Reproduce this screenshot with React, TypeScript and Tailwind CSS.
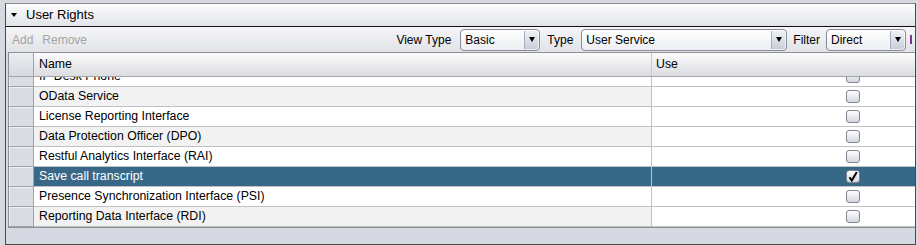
const ROWS = [
  { name: 'IP Desk Phone', checked: false },
  { name: 'OData Service', checked: false },
  { name: 'License Reporting Interface', checked: false },
  { name: 'Data Protection Officer (DPO)', checked: false },
  { name: 'Restful Analytics Interface (RAI)', checked: false },
  { name: 'Save call transcript', checked: true },
  { name: 'Presence Synchronization Interface (PSI)', checked: false },
  { name: 'Reporting Data Interface (RDI)', checked: false },
]

const SELECTED = 5

function Combo({ value, width }: { value: string; width: string }) {
  return (
    <div
      className={`${width} flex h-[22px] items-center rounded-[4px] border border-[#878c96] bg-gradient-to-b from-[#ffffff] to-[#eceef2]`}
    >
      <span className="flex-1 truncate pl-[4px] text-[12px] leading-none text-black">{value}</span>
      <div className="mr-[1px] flex h-[18px] w-[14px] items-center justify-center rounded-r-[3px] border-l border-[#a7adb8] bg-gradient-to-b from-[#eef1f5] to-[#c9cfd9]">
        <span className="h-0 w-0 border-x-[3.5px] border-t-[5px] border-x-transparent border-t-black" />
      </div>
    </div>
  )
}

function CheckBox({ checked }: { checked: boolean }) {
  return (
    <div className="flex h-[13px] w-[14px] items-center justify-center rounded-[3px] border border-[#7d8593] bg-gradient-to-b from-[#ffffff] to-[#d3d7df]">
      {checked && (
        <svg width="10" height="11" viewBox="0 0 10 11">
          <path d="M1.5 6.2 L3.8 9.5 L8.8 1" fill="none" stroke="#000" strokeWidth="2" strokeLinejoin="miter" />
        </svg>
      )}
    </div>
  )
}

export default function App() {
  return (
    <div
      className="h-[245px] w-[918px] overflow-hidden bg-[#d6d9df] pl-[5px] pt-[3px]"
      style={{ fontFamily: '"Liberation Sans", Arial, sans-serif' }}
    >
      <div className="flex h-[242px] w-[911px] flex-col border border-[#4a4a4a] border-t-[#8c8c8c] bg-[#d6d9e1]">
        {/* Title bar */}
        <div className="flex h-[23px] shrink-0 items-center border-b border-[#111] bg-gradient-to-b from-[#fcfcfd] to-[#e2e4e9] pl-[5px]">
          <span className="h-0 w-0 border-x-[3.5px] border-t-[4px] border-x-transparent border-t-black" />
          <span className="ml-[9px] text-[13px] text-black">User Rights</span>
        </div>

        {/* Toolbar */}
        <div className="flex h-[25px] shrink-0 items-center bg-gradient-to-b from-[#f6f6f8] to-[#e1e3e7] pl-[6px] pr-[3px] text-[12px]">
          <span className="text-[#a4a4a4]">Add</span>
          <span className="ml-[9px] text-[#a4a4a4]">Remove</span>
          <div className="ml-auto flex items-center">
            <span className="text-black">View Type</span>
            <div className="ml-[9px]">
              <Combo value="Basic" width="w-[80px]" />
            </div>
            <span className="ml-[7px] text-black">Type</span>
            <div className="ml-[8px]">
              <Combo value="User Service" width="w-[206px]" />
            </div>
            <span className="ml-[6px] text-black">Filter</span>
            <div className="ml-[6px]">
              <Combo value="Direct" width="w-[80px]" />
            </div>
            <span className="ml-[4px] h-[9px] w-[2px] bg-[#7e3590]" />
          </div>
        </div>

        {/* Table */}
        <div className="ml-[2px] flex flex-col border-l border-t border-b border-[#8f9196]">
          {/* Header */}
          <div className="flex h-[24px] border-b border-[#a3a5a9] text-[12.3px] text-black">
            <div className="w-[25px] shrink-0 border-r border-[#a0a2a6] bg-gradient-to-b from-[#eceef2] to-[#d6d9df]" />
            <div className="flex w-[618px] shrink-0 items-center border-r border-[#c8c9cc] bg-gradient-to-b from-[#fbfbfc] to-[#dcdde1] pl-[5px]">
              Name
            </div>
            <div className="flex flex-1 items-center bg-gradient-to-b from-[#fbfbfc] to-[#dcdde1] pl-[4px]">Use</div>
          </div>

          {/* Body */}
          <div className="h-[150px] overflow-hidden">
            <div className="-mt-[10px]">
              {ROWS.map((r, i) => {
                const selected = i === SELECTED
                const nameBg = selected ? 'bg-[#386888] text-white' : i % 2 === 1 ? 'bg-[#f2f2f2] text-black' : 'bg-white text-black'
                const useBg = selected ? 'bg-[#386888]' : 'bg-white'
                return (
                  <div key={r.name} className="flex h-[20px] text-[12.3px]">
                    <div className="w-[25px] shrink-0 border-b border-r border-[#a0a2a6] bg-[#d9dce2] shadow-[inset_1px_1px_0_#eef0f4]" />
                    <div className={`flex w-[618px] shrink-0 items-center border-b border-r border-[#c2c2c2] pl-[5px] ${nameBg}`}>
                      {r.name}
                    </div>
                    <div className={`flex flex-1 items-center border-b border-[#c2c2c2] pl-[194px] ${useBg}`}>
                      <CheckBox checked={r.checked} />
                    </div>
                  </div>
                )
              })}
            </div>
          </div>
        </div>
      </div>
    </div>
  )
}
